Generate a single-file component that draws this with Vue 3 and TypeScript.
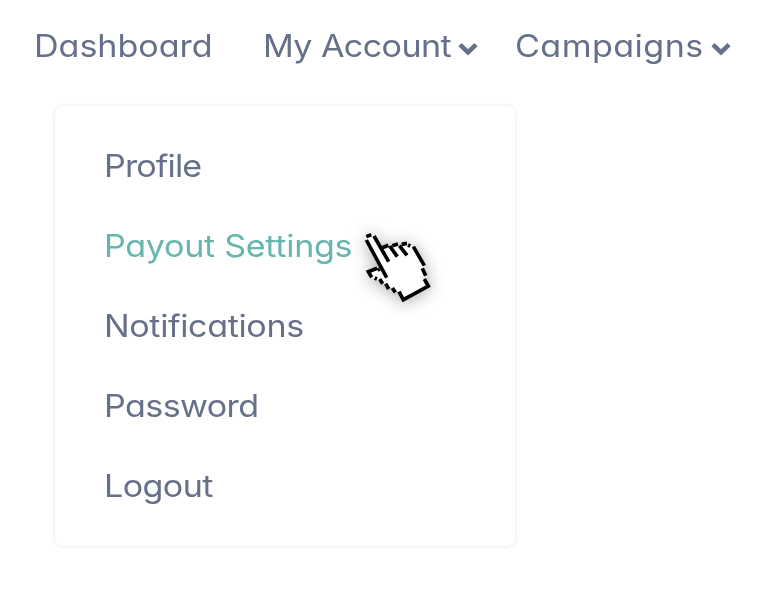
<script setup lang="ts">
interface NavItem { label: string; key: string; menu: boolean }
interface MenuItem { label: string; key: string; active?: boolean }

const navItems: NavItem[] = [
  { label: 'Dashboard', key: 'dashboard', menu: false },
  { label: 'My Account', key: 'account', menu: true },
  { label: 'Campaigns', key: 'campaigns', menu: true },
]
const menuItems: MenuItem[] = [
  { label: 'Profile', key: 'profile' },
  { label: 'Payout Settings', key: 'payout', active: true },
  { label: 'Notifications', key: 'notifications' },
  { label: 'Password', key: 'password' },
  { label: 'Logout', key: 'logout' },
]
</script>

<template>
  <div class="page">
    <nav class="nav">
      <a v-for="item in navItems" :key="item.key" :class="['nav-item', item.key]">
        <span class="label">{{ item.label }}</span>
        <svg v-if="item.menu" class="chevron" viewBox="0 0 20 14">
          <path d="M2 2.6 L10 10.4 L18 2.6" />
        </svg>
      </a>
    </nav>
    <div class="dropdown">
      <a v-for="item in menuItems" :key="item.key" :class="['menu-item', 'label', item.key, { active: item.active }]">{{ item.label }}</a>
    </div>
    <svg class="pointer" viewBox="0 0 300 300">
      <path class="fill" d="M64 57 L70 47 L84 44 L90 50 L110 84 L130 76 L136 79 L158 72 L165 77 L188 70 L205 80 L238 137 L250 198 L175 239 L158 214 L80 173 L70 156 L92 146 L110 145 Z" />
      <path class="line" d="M64 50 L79 44 M64 60 L125 173 M87 48 L131 125 M112 83 L130 76 M134 78 L157 110 M142 77 L159 72 M163 77 L186 106 M170 73 L186 70 M189 75 L196 78 M205 80 L238 137 M232 145 L242 167 M238 177 L250 198 L175 239 L162 215 M96 145 L70 155 L80 172 M89 174 L96 177 M104 177 L113 191 M122 191 L131 207 M142 204 L151 217 M98 151 L104 147" />
    </svg>
  </div>
</template>

<style>
body { background: #fff; }
</style>
<style scoped>
.page {
  position: relative;
  box-sizing: border-box;
  width: 778px;
  height: 596px;
  padding: 22px 0 0 34px;
  overflow: hidden;
  font-family: Inter, "Open Sans", sans-serif;
  font-size: 31px;
  font-feature-settings: "cv11" 1;
  line-height: 48px;
  color: #667089;
}
.label {
  white-space: nowrap;
  letter-spacing: -0.55px;
  transform: scaleX(1.1);
  transform-origin: left center;
}
.nav { display: flex; height: 48px; }
.nav-item { display: flex; align-items: center; }
.nav-item.dashboard { width: 229px; }
.nav-item.dashboard .label { letter-spacing: -0.05px; }
.nav-item.account { width: 252px; }
.nav-item.account .label { width: 195px; }
.nav-item.campaigns .label { width: 196px; letter-spacing: 0.4px; }
.chevron { width: 20px; height: 14px; margin-top: 6px; flex: none; }
.chevron path { fill: none; stroke: #667089; stroke-width: 4.6; }
.dropdown {
  display: flex;
  flex-direction: column;
  gap: 32px;
  box-sizing: border-box;
  width: 460px;
  height: 440px;
  margin: 36px 0 0 21px;
  padding: 36px 49px;
  border-radius: 8px;
  background: #fff;
  box-shadow: 0 0 4px rgba(0, 0, 0, 0.1);
}
.menu-item.profile { letter-spacing: -0.8px; }
.menu-item.payout { letter-spacing: -0.28px; }
.menu-item.notifications { letter-spacing: -0.35px; }
.menu-item.active { color: #66b5ae; }
.pointer {
  position: absolute;
  left: 345px;
  top: 220px;
  width: 100px;
  height: 100px;
  overflow: visible;
  filter: drop-shadow(0 2px 8px rgba(0, 0, 0, 0.33));
}
.fill { fill: #fff; }
.line { fill: none; stroke: #000; stroke-width: 11; }
</style>
